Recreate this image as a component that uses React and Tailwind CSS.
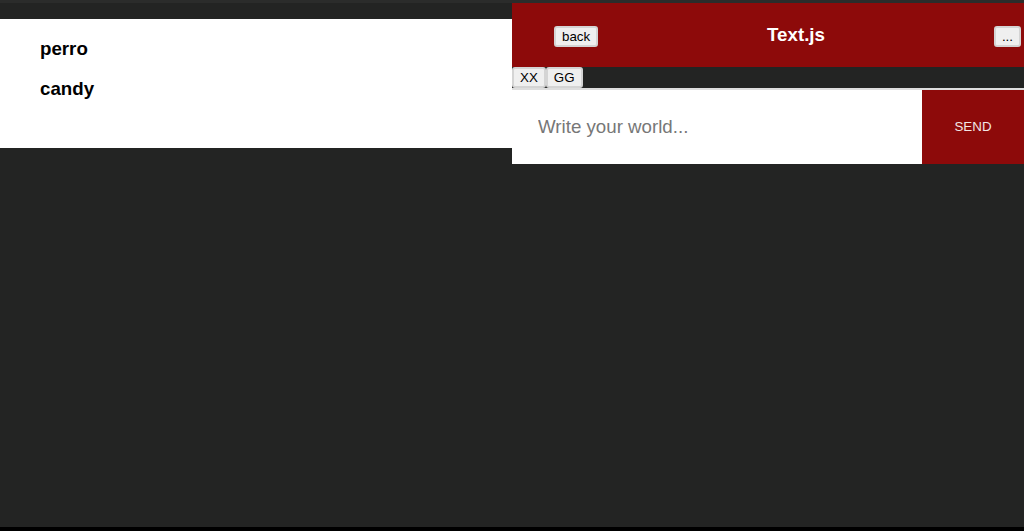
import React from 'react';

const btn = 'bg-[#efefef] border-2 border-[#d4d4d4] rounded-[3px] px-[6px] py-[1px] text-[13.33px] leading-[15px] text-black';

export default function App() {
  const items = ['perro', 'candy'];

  return (
    <div className="h-screen w-full flex flex-col bg-[#232423] font-['Liberation_Sans',Arial,sans-serif]">
      <div className="h-[3px] bg-[#2b2c2b]" />
      <div className="flex-1 flex">
        {/* List */}
        <div className="w-1/2">
          <div className="mt-[16px] bg-white pt-[19px] pb-[48px] pl-[40px] flex flex-col gap-[18.5px]">
            {items.map(item => (
              <h3 key={item} className="text-[18.72px] font-bold text-black leading-[21.5px]">{item}</h3>
            ))}
          </div>
        </div>

        {/* Chat */}
        <div className="w-1/2 flex flex-col">
          <div className="h-[64px] bg-[#8d0a0a] flex items-center">
            <button className={`${btn} ml-[42px] mt-[3px]`}>back</button>
            <h3 className="flex-1 text-center text-white font-bold text-[18.72px]">Text.js</h3>
            <button className={`${btn} mr-[3px] mt-[3px]`}>...</button>
          </div>
          <div className="h-[21px] flex">
            <button className={`${btn} rounded-[2px]`}>XX</button>
            <button className={`${btn} rounded-[2px]`}>GG</button>
          </div>
          <div className="h-[2px] bg-[#dedede]" />
          <div className="h-[74px] flex">
            <input
              placeholder="Write your world..."
              className="flex-1 min-w-0 bg-white px-[26px] text-[18.72px] outline-none placeholder:text-[#777777]"
            />
            <button className="w-[102px] bg-[#8d0a0a] text-[#f3e6e6] text-[13.33px]">SEND</button>
          </div>
        </div>
      </div>
      <div className="h-[4px] bg-black" />
    </div>
  );
}
